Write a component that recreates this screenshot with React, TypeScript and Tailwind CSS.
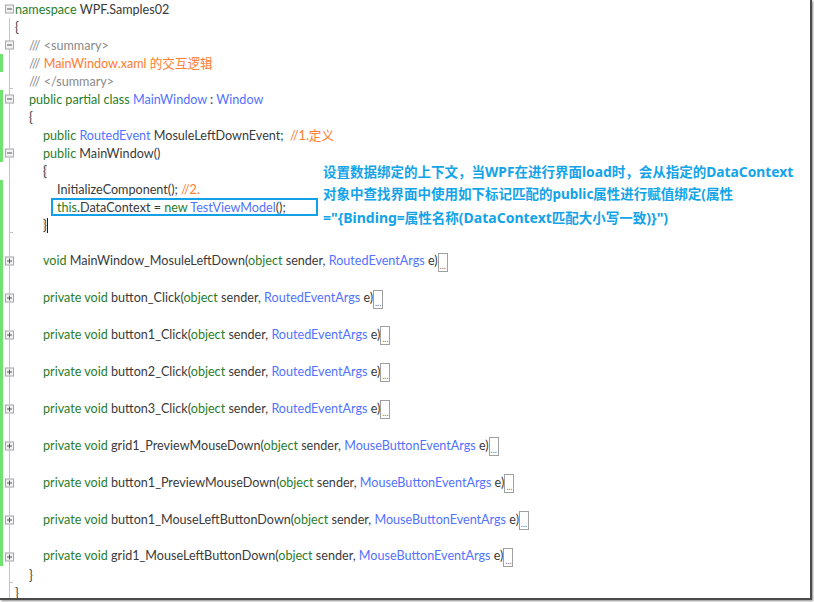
const K = ({ c }: { c: string }) => <span className="text-[#2a7d2a]">{c}</span>;
const T = ({ c }: { c: string }) => <span className="text-[#5272ff]">{c}</span>;
const O = ({ c }: { c: string }) => <span className="text-[#ff7b2e]">{c}</span>;
const G = ({ c }: { c: string }) => <span className="text-[#8a8a8a]">{c}</span>;

const Fold = ({ open }: { open: boolean }) => (
  <span className="absolute left-[5px] top-1/2 flex h-[9px] w-[9px] -translate-y-1/2 items-center justify-center border border-[#a8a8a8] bg-[#f2f2f2]">
    <span className="relative block h-px w-[5px] bg-[#555]">
      {!open && <span className="absolute left-[2px] top-[-2px] block h-[5px] w-px bg-[#555]" />}
    </span>
  </span>
);

const Dots = () => (
  <span className="inline-flex h-[19px] w-[10px] items-end justify-center border border-[#a0a0a0] align-middle text-[9px] leading-[10px] text-[#777]">...</span>
);

type Row = { indent?: number; bar?: boolean; fold?: "open" | "closed"; tick?: boolean; tall?: boolean; content?: React.ReactNode };

const method = (pre: React.ReactNode, args: string): Row => ({
  indent: 2,
  bar: true,
  fold: "closed",
  tall: true,
  content: (
    <>
      {pre}(<K c="object" /> sender, <T c={args} /> e)
      <Dots />
    </>
  ),
});
const blank = (bar = true): Row => ({ bar });
const priv = (name: string) => (
  <>
    <K c="private void" /> {name}
  </>
);

const rows: Row[] = [
  { fold: "open", content: <><K c="namespace" /> WPF.Samples02</> },
  { content: "{" },
  { indent: 1, fold: "open", content: <><G c="/// <summary>" /></> },
  { indent: 1, bar: true, content: <><G c="/// " /><O c="MainWindow.xaml 的交互逻辑" /></> },
  { indent: 1, tick: true, content: <G c="/// </summary>" /> },
  { indent: 1, bar: true, fold: "open", content: <><K c="public partial class" /> <T c="MainWindow" /> : <T c="Window" /></> },
  { indent: 1, bar: true, content: "{" },
  { indent: 2, bar: true, content: <><K c="public" /> <T c="RoutedEvent" /> MosuleLeftDownEvent;&nbsp; <O c="//1.定义" /></> },
  { indent: 2, bar: true, fold: "open", content: <><K c="public" /> MainWindow()</> },
  { indent: 2, content: <span className="bg-[#eeeeee]">{"{"}</span> },
  { indent: 3, bar: true, content: <>InitializeComponent(); <O c="//2." /></> },
  { indent: 3, bar: true, content: <><K c="this" />.DataContext = <K c="new" /> <T c="TestViewModel" />();</> },
  { indent: 2, bar: true, tick: true, content: <span className="border-r border-[#222] bg-[#eeeeee]">{"}"}</span> },
  blank(),
  method(<><K c="void" /> MainWindow_MosuleLeftDown</>, "RoutedEventArgs"),
  blank(),
  method(priv("button_Click"), "RoutedEventArgs"),
  blank(),
  method(priv("button1_Click"), "RoutedEventArgs"),
  blank(),
  method(priv("button2_Click"), "RoutedEventArgs"),
  blank(),
  method(priv("button3_Click"), "RoutedEventArgs"),
  blank(),
  method(priv("grid1_PreviewMouseDown"), "MouseButtonEventArgs"),
  blank(),
  method(priv("button1_PreviewMouseDown"), "MouseButtonEventArgs"),
  blank(),
  method(priv("button1_MouseLeftButtonDown"), "MouseButtonEventArgs"),
  blank(),
  method(priv("grid1_MouseLeftButtonDown"), "MouseButtonEventArgs"),
  { indent: 1, tick: true, content: "}" },
  { content: "}" },
];

const pad = ["pl-0", "pl-[14px]", "pl-[28px]", "pl-[42px]"];

export default function App() {
  return (
    <div className="h-[602px] w-[814px] overflow-hidden bg-white">
      <div className="relative h-[600px] w-[812px] overflow-hidden border-b-2 border-r-2 border-[#4a4a4a] bg-white font-['Lato','Noto_Sans_CJK_SC',sans-serif] text-[12.6px] text-[#3a3a3a] shadow-[1px_1px_2px_#888]">
        {rows.map((r, i) => (
          <div key={i} className={`flex items-center ${r.tall ? "h-[18.9px]" : "h-[18px]"}`}>
            <div className="relative h-full w-[15px] shrink-0 self-stretch">
              {r.bar && <span className="absolute bottom-0 left-0 top-0 block w-[2.5px] bg-[#6fe36f]" />}
              {i > 0 && <span className="absolute bottom-0 left-[9px] top-0 block w-px bg-[#c4c4c4]" />}
              {r.tick && <span className="absolute bottom-[1px] left-[9px] block h-px w-[4px] bg-[#c4c4c4]" />}
              {r.fold && <Fold open={r.fold === "open"} />}
            </div>
            <div className={`whitespace-pre pt-px leading-[18px] ${pad[r.indent ?? 0]}`}>{r.content}</div>
          </div>
        ))}

        <div className="absolute left-[51px] top-[198px] h-[18px] w-[267px] border-[2.5px] border-[#12a0e6]" />

        <div className="absolute left-[323px] top-[160px] whitespace-nowrap font-['Noto_Sans','Noto_Sans_CJK_SC',sans-serif] text-[13.5px] font-bold leading-[23px] text-[#12a3e8]">
          <div className="h-[23px]">
            设置数据绑定的上下文，当<span className="text-[13.8px]">WPF</span>在进行界面<span className="text-[13.8px]">load</span>时，会从指定的<span className="text-[13.8px]">DataContext</span>
          </div>
          <div className="h-[23px]">对象中查找界面中使用如下标记匹配的public属性进行赋值绑定(属性</div>
          <div className="h-[23px]">
            <span className="text-[14px]">="{"{"}Binding=</span>属性名称<span className="text-[14px]">(DataContext</span>匹配大小写一致<span className="text-[14px]">){"}"}")</span>
          </div>
        </div>
      </div>
    </div>
  );
}
